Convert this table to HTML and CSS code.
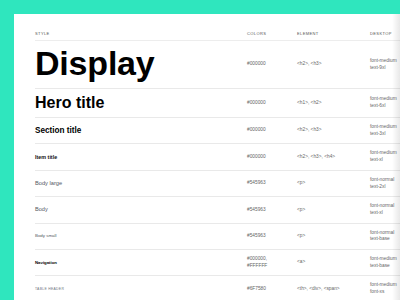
FILE: index.html
```html
<!DOCTYPE html>
<html>
<head>
<meta charset="utf-8">
<link rel="stylesheet" href="styles.css">
</head>
<body>
<div class="page">
  <div class="card">
    <div class="row head">
      <div>Style</div><div>Colors</div><div>Element</div><div>Desktop</div>
    </div>
    <div class="row">
      <div class="s display">Display</div>
      <div class="c">#000000</div>
      <div class="c">&lt;h2&gt;, &lt;h3&gt;</div>
      <div class="c d">font-medium<br>text-9xl</div>
    </div>
    <div class="row">
      <div class="s hero">Hero title</div>
      <div class="c">#000000</div>
      <div class="c">&lt;h1&gt;, &lt;h2&gt;</div>
      <div class="c d">font-medium<br>text-6xl</div>
    </div>
    <div class="row">
      <div class="s section">Section title</div>
      <div class="c">#000000</div>
      <div class="c">&lt;h2&gt;, &lt;h3&gt;</div>
      <div class="c d">font-medium<br>text-3xl</div>
    </div>
    <div class="row">
      <div class="s item">Item title</div>
      <div class="c">#000000</div>
      <div class="c">&lt;h2&gt;, &lt;h3&gt;, &lt;h4&gt;</div>
      <div class="c d">font-medium<br>text-xl</div>
    </div>
    <div class="row">
      <div class="s blarge">Body large</div>
      <div class="c">#545963</div>
      <div class="c">&lt;p&gt;</div>
      <div class="c d">font-normal<br>text-2xl</div>
    </div>
    <div class="row">
      <div class="s body">Body</div>
      <div class="c">#545963</div>
      <div class="c">&lt;p&gt;</div>
      <div class="c d">font-normal<br>text-xl</div>
    </div>
    <div class="row">
      <div class="s bsmall">Body small</div>
      <div class="c">#545963</div>
      <div class="c">&lt;p&gt;</div>
      <div class="c d">font-normal<br>text-base</div>
    </div>
    <div class="row">
      <div class="s nav">Navigation</div>
      <div class="c d">#000000,<br>#FFFFFF</div>
      <div class="c">&lt;a&gt;</div>
      <div class="c d">font-medium<br>text-base</div>
    </div>
    <div class="row">
      <div class="s th">Table header</div>
      <div class="c">#6F7580</div>
      <div class="c">&lt;th&gt;, &lt;div&gt;, &lt;span&gt;</div>
      <div class="c d">font-medium<br>font-xs</div>
    </div>
  </div>
</div>
</body>
</html>
```

FILE: styles.css
```css
html, body {
  margin: 0;
  padding: 0;
}
body {
  width: 400px;
  height: 300px;
  overflow: hidden;
  background: #2fe6be;
  font-family: "Liberation Sans", Arial, sans-serif;
}
.page {
  padding: 14px 0 0 14px;
}
.card {
  position: relative;
  background: #ffffff;
  padding: 17px 0 20px 21px;
  min-height: 300px;
}
.card::after {
  content: "";
  position: absolute;
  top: 0;
  right: 0;
  bottom: 0;
  width: 8px;
  background: linear-gradient(to right, rgba(0,0,0,0), rgba(0,0,0,0.09));
}
.row {
  display: grid;
  grid-template-columns: 212px 50px 73px 1fr;
  align-items: center;
  padding: 6px 0;
  border-bottom: 1px solid #e9e9e9;
  white-space: nowrap;
}
.head {
  padding: 0 0 3px 0;
  font-size: 4px;
  line-height: 6px;
  letter-spacing: 0.4px;
  text-transform: uppercase;
  color: #555;
  border-bottom-color: #ededed;
}
.c {
  font-size: 4.8px;
  line-height: 6.7px;
  color: #666;
}
.s {
  color: #000;
}
.display {
  font-size: 34px;
  line-height: 32px;
  font-weight: 700;
  letter-spacing: -0.2px;
  padding-bottom: 3px;
}
.hero {
  font-size: 16px;
  line-height: 16px;
  font-weight: 700;
}
.section {
  font-size: 8.2px;
  line-height: 10px;
  font-weight: 700;
}
.item {
  font-size: 5.4px;
  line-height: 7px;
  font-weight: 700;
  color: #111;
}
.blarge {
  font-size: 5.7px;
  line-height: 7px;
  color: #545963;
}
.body {
  font-size: 5.6px;
  line-height: 7px;
  color: #545963;
}
.bsmall {
  font-size: 4.4px;
  line-height: 6px;
  color: #545963;
}
.nav {
  font-size: 4.3px;
  line-height: 6px;
  font-weight: 700;
}
.th {
  font-size: 3.4px;
  line-height: 6px;
  text-transform: uppercase;
  letter-spacing: 0.3px;
  color: #6f7580;
}
```
